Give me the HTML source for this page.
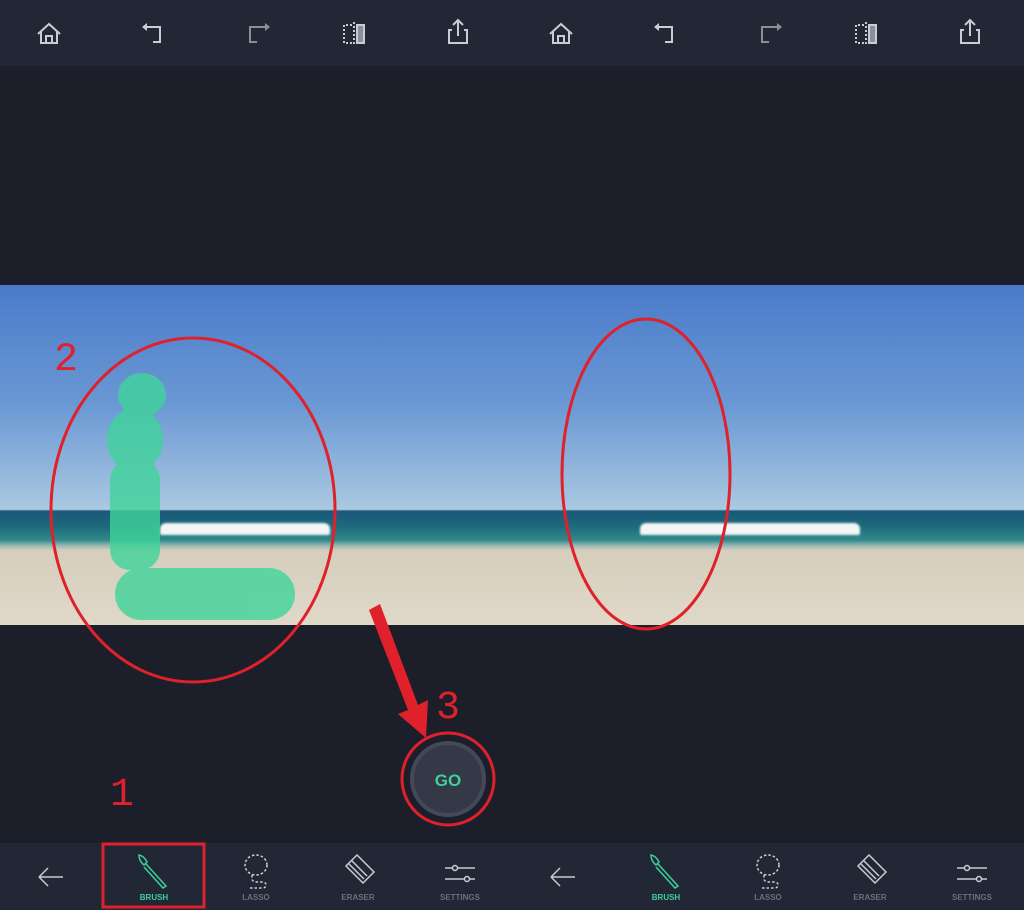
<!DOCTYPE html>
<html><head><meta charset="utf-8"><style>
body{margin:0;width:1024px;height:910px;background:#1c1f2a;overflow:hidden;position:relative;font-family:"Liberation Sans",sans-serif}
.bar{position:absolute;left:0;width:1024px;background:#222735}
.img{position:absolute;top:285px;height:340px;width:512px;background:linear-gradient(#4a7bc9 0%,#6a98d4 35%,#a6c5e0 64%,#aecadf 66%,#19577a 66.5%,#1d6a7c 71%,#2f8a8a 75%,#8fb4b0 76.5%,#d6cebd 78%,#e0d8c8 100%)}
.wave{position:absolute;height:12px;background:#f4f6f6;border-radius:6px 6px 2px 2px;filter:blur(1px)}
.lbl{position:absolute;top:893px;font-size:8px;font-weight:bold;color:#6a6f7c;width:80px;text-align:center}
.num{position:absolute;color:#e0202a;font-family:"Liberation Mono",monospace;font-size:40px}
</style></head><body>
<div class="bar" style="top:0;height:66px"></div>
<div class="bar" style="top:843px;height:67px"></div>
<div class="img" style="left:0"></div>
<div class="img" style="left:512px"></div>
<div class="wave" style="left:160px;top:523px;width:170px"></div>
<div class="wave" style="left:640px;top:523px;width:220px"></div>
<svg width="1024" height="910" style="position:absolute;left:0;top:0">
<g fill="none" stroke="#c8ccd4" stroke-width="2">
<g id="top">
<path d="M38 34 L49 24 L60 34 M41 31 V43 H57 V31 M46 43 V36 H52 V43"/>
<path d="M146 27 H160 V42 H153"/>
<path d="M266 27 H250 V42 H257" stroke="#8a8f9a"/>
<path d="M354 22 V46 M352 25 H344 V43 H352" stroke-dasharray="2 2"/>
<path d="M357 25 H364 V43 H357 Z" fill="#8a8f9a"/>
<path d="M458 20 V36 M453 25 l5 -5 5 5 M452 30 H449 V43 H467 V30 H464"/>
</g>
<use href="#top" x="512"/>
</g>
<path d="M265 23 l5 4 -5 4 Z M777 23 l5 4 -5 4 Z" fill="#8a8f9a"/>
<path d="M147 23 l-5 4 5 4 Z M659 23 l-5 4 5 4 Z" fill="#c8ccd4"/>
<g fill="#3fd49a" opacity="0.8">
<ellipse cx="142" cy="395" rx="24" ry="22"/>
<ellipse cx="135" cy="440" rx="28" ry="32"/>
<rect x="110" y="460" width="50" height="110" rx="20"/>
<rect x="115" y="568" width="180" height="52" rx="26"/>
</g>
<g fill="none" stroke="#e0202a" stroke-width="3">
<ellipse cx="193" cy="510" rx="142" ry="172"/>
<ellipse cx="646" cy="474" rx="84" ry="155"/>
<circle cx="448" cy="779" r="46"/>
<rect x="103" y="844" width="101" height="63"/>
</g>
<path d="M369 610 L380 604 L418 705 L428 700 L426 738 L398 714 L408 710 Z" fill="#e0202a"/>
<circle cx="448" cy="779" r="36" fill="#343847" stroke="#444958" stroke-width="4"/>
<text x="448" y="786" font-family="Liberation Sans" font-size="17" font-weight="bold" fill="#3fcf9a" text-anchor="middle">GO</text>
<g fill="none" stroke-width="1.5">
<g id="bot">
<path d="M39 877 H63 M39 877 l9 -9 M39 877 l9 9" stroke="#c8ccd4"/>
<path d="M139 855 q5 1 8 7 l-3 3 q-5 -4 -5 -10 Z M146 864 l20 22 l-3 2 l-19 -21" stroke="#3fcf9a"/>
<ellipse cx="256" cy="865" rx="11" ry="10" stroke="#c8ccd4" stroke-dasharray="2.5 2"/>
<path d="M252 875 v4 q0 3 6 3 h4 q4 0 4 3 q0 3 -4 3 h-14" stroke="#c8ccd4" stroke-dasharray="2.5 2"/>
<path d="M357 855 L374 872 L363 883 L346 866 Z M352 861 l15 15 M349 864 l15 15" stroke="#c8ccd4"/>
<path d="M445 868 H475 M445 879 H475" stroke="#c8ccd4"/>
<circle cx="455" cy="868" r="2.5" fill="#222735" stroke="#c8ccd4"/>
<circle cx="467" cy="879" r="2.5" fill="#222735" stroke="#c8ccd4"/>
</g>
<use href="#bot" x="512"/>
</g>
</svg>
<div class="lbl" style="left:114px;color:#3fcf9a">BRUSH</div>
<div class="lbl" style="left:216px">LASSO</div>
<div class="lbl" style="left:318px">ERASER</div>
<div class="lbl" style="left:420px">SETTINGS</div>
<div class="lbl" style="left:626px;color:#3fcf9a">BRUSH</div>
<div class="lbl" style="left:728px">LASSO</div>
<div class="lbl" style="left:830px">ERASER</div>
<div class="lbl" style="left:932px">SETTINGS</div>
<div class="num" style="left:54px;top:338px">2</div>
<div class="num" style="left:110px;top:773px">1</div>
<div class="num" style="left:436px;top:686px">3</div>
</body></html>
